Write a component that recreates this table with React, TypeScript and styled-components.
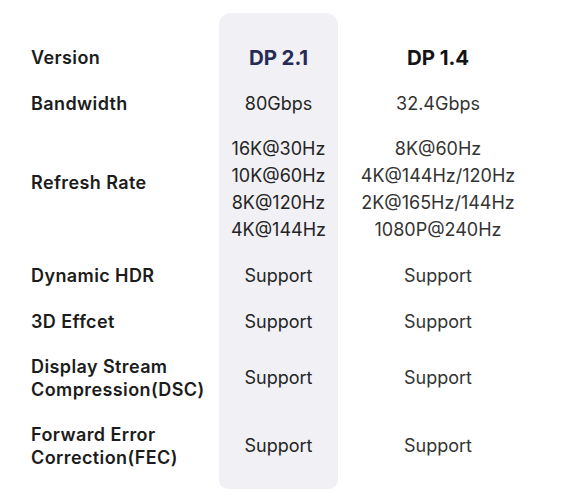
import React from 'react';
import styled, { createGlobalStyle } from 'styled-components';

const GlobalStyle = createGlobalStyle`
  html, body {
    margin: 0;
    padding: 0;
    background: #ffffff;
  }
  body {
    font-family: Inter, 'Open Sans', sans-serif;
    color: #1e1e1e;
  }
`;

const COLS = '188px 119px 200px';
const SHADE = '#f0f0f5';

const Table = styled.div`
  display: flex;
  flex-direction: column;
  padding: 13px 0 0 31px;
`;

const Row = styled.div<{ $h: number }>`
  display: grid;
  grid-template-columns: ${COLS};
  height: ${(p) => p.$h}px;
`;

const Cap = styled.div<{ $bottom?: boolean }>`
  grid-column: 2;
  background: ${SHADE};
  border-radius: ${(p) => (p.$bottom ? '0 0 12px 12px' : '12px 12px 0 0')};
`;

const Label = styled.div<{ $lift?: number }>`
  display: flex;
  align-items: center;
  font-size: 18px;
  font-weight: 600;
  line-height: 23px;
  letter-spacing: 0.4px;
  color: #1c1c1c;
  padding-bottom: ${(p) => p.$lift ?? 0}px;
`;

const Cell = styled.div<{ $shade?: boolean }>`
  display: flex;
  flex-direction: column;
  align-items: center;
  justify-content: center;
  text-align: center;
  font-size: 18px;
  font-weight: 400;
  line-height: 27px;
  letter-spacing: 0;
  background: ${(p) => (p.$shade ? SHADE : 'transparent')};
  color: ${(p) => (p.$shade ? '#242424' : '#333333')};
`;

const Head = styled(Cell)`
  font-size: 20.5px;
  font-weight: 700;
  letter-spacing: -0.1px;
  color: ${(p) => (p.$shade ? '#272a55' : '#141414')};
`;

type Spec = {
  label: React.ReactNode;
  a: string[];
  b: string[];
  h: number;
  lift?: number;
};

const specs: Spec[] = [
  { label: 'Bandwidth', a: ['80Gbps'], b: ['32.4Gbps'], h: 46 },
  {
    label: 'Refresh Rate',
    a: ['16K@30Hz', '10K@60Hz', '8K@120Hz', '4K@144Hz'],
    b: ['8K@60Hz', '4K@144Hz/120Hz', '2K@165Hz/144Hz', '1080P@240Hz'],
    h: 126,
    lift: 13,
  },
  { label: 'Dynamic HDR', a: ['Support'], b: ['Support'], h: 46 },
  { label: '3D Effcet', a: ['Support'], b: ['Support'], h: 46 },
  {
    label: (
      <>
        Display Stream
        <br />
        Compression(DSC)
      </>
    ),
    a: ['Support'],
    b: ['Support'],
    h: 67,
  },
  {
    label: (
      <>
        Forward Error
        <br />
        Correction(FEC)
      </>
    ),
    a: ['Support'],
    b: ['Support'],
    h: 69,
  },
];

function App(): JSX.Element {
  return (
    <>
      <GlobalStyle />
      <Table>
        <Row $h={21}>
          <Cap />
        </Row>
        <Row $h={46}>
          <Label>Version</Label>
          <Head $shade>DP 2.1</Head>
          <Head>DP 1.4</Head>
        </Row>
        {specs.map((s, i) => (
          <Row $h={s.h} key={i}>
            <Label $lift={s.lift}>
              <span>{s.label}</span>
            </Label>
            <Cell $shade>
              {s.a.map((t) => (
                <span key={t}>{t}</span>
              ))}
            </Cell>
            <Cell>
              {s.b.map((t) => (
                <span key={t}>{t}</span>
              ))}
            </Cell>
          </Row>
        ))}
        <Row $h={9}>
          <Cap $bottom />
        </Row>
      </Table>
    </>
  );
}

export default App;
